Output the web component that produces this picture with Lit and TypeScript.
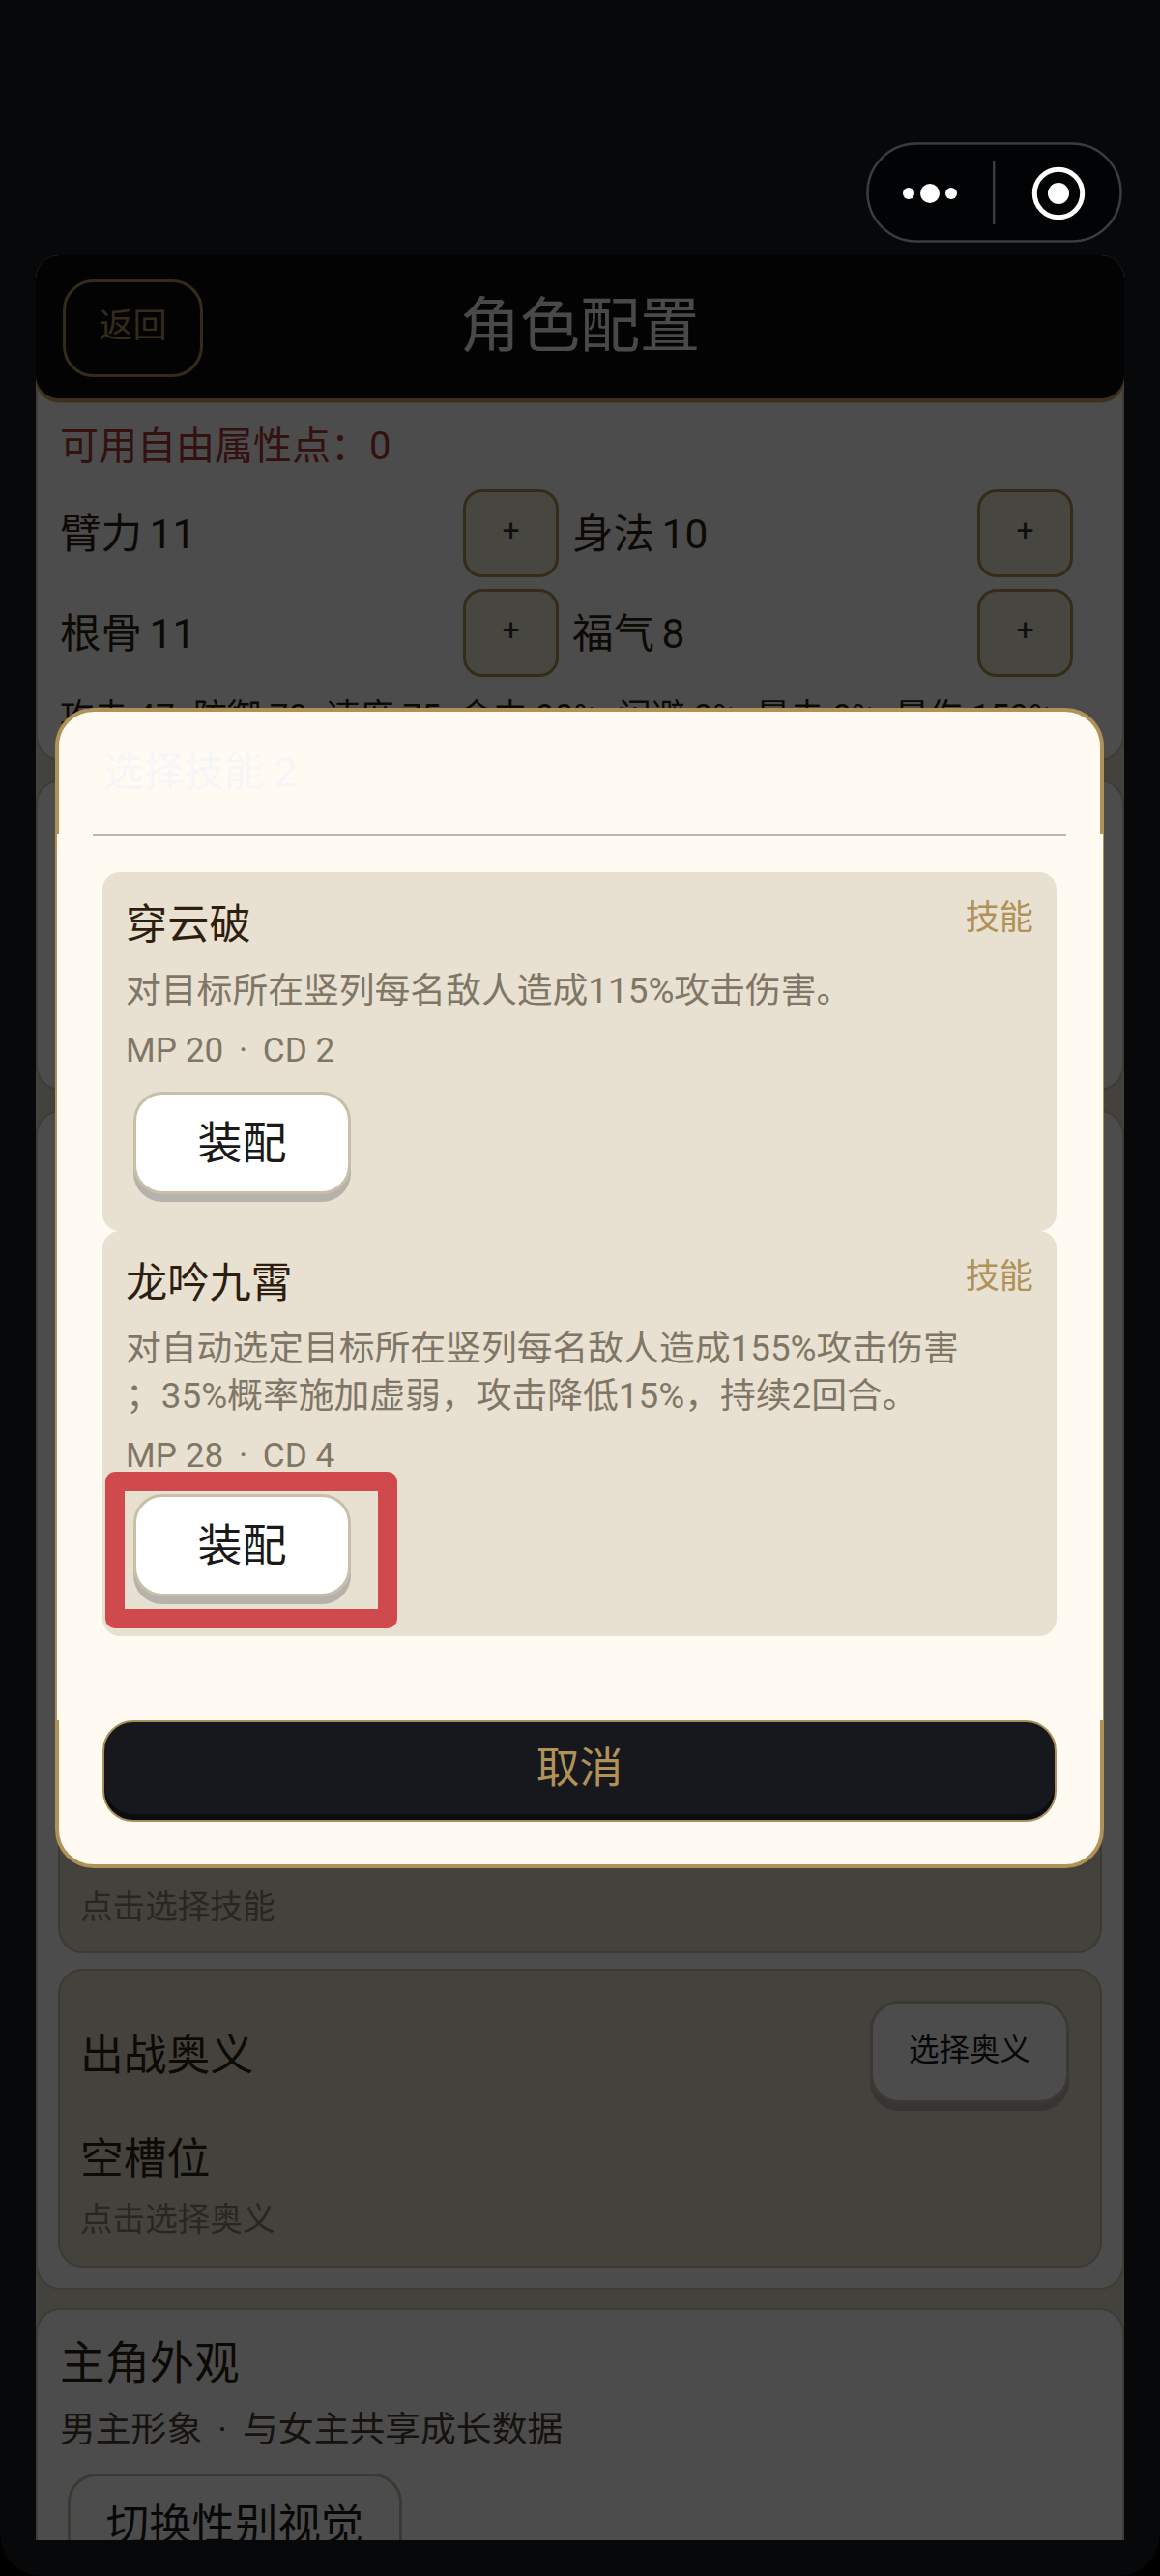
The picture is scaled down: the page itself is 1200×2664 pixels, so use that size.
import { LitElement, html, css } from "lit";
import { customElement } from "lit/decorators.js";

@customElement("app-root")
export class AppRoot extends LitElement {
  static styles = css`
    :host {
      display: block;
      width: 1200px;
      height: 2664px;
      position: relative;
      overflow: hidden;
      background: #000;
      font-family: Roboto, "Noto Sans CJK SC", sans-serif;
      color: #2d1e10;
    }
    * { box-sizing: border-box; }
    .screen {
      isolation: isolate;
      padding: 264px 37px 0;
      height: 2664px;
      overflow: hidden;
      background: #181c24;
      border-radius: 0 0 44px 44px;
    }
    .column {
      height: 2363px;
      overflow: hidden;
      background: #e0dcca;
      border-radius: 24px 24px 0 0;
      display: flex;
      flex-direction: column;
    }
    .header {
      height: 148px;
      flex: none;
      background: #0a0b0e;
      border-radius: 24px;
      box-shadow: 0 4.5px 0 #c8a45c;
      margin-bottom: -28px;
      position: relative;
      z-index: 1;
      display: flex;
      align-items: center;
      justify-content: center;
      padding-bottom: 1px;
    }
    .back {
      position: absolute;
      left: 28px;
      top: 25px;
      width: 145px;
      height: 101px;
      border: 3px solid #b09258;
      border-radius: 32px;
      display: flex;
      align-items: center;
      justify-content: center;
      color: #b09258;
      font-size: 35.2px;
      padding-bottom: 13px;
    }
    .title {
      font-size: 62px;
      line-height: 80px;
      color: #f8f6f2;
    }
    .card {
      background: #fff;
      border: 2px solid #d0c8b4;
      border-radius: 26px;
      flex: none;
    }
    .attrs {
      height: 403px;
      padding: 53px 51px 0 23px;
      border-top: none;
    }
    .free {
      font-size: 40px;
      line-height: 50px;
      color: #a83a35;
      margin-bottom: 19px;
    }
    .grid {
      display: grid;
      grid-template-columns: 516px 518px;
      column-gap: 14px;
      row-gap: 12px;
    }
    .attr {
      display: flex;
      align-items: center;
      justify-content: space-between;
      font-size: 42.5px;
      word-spacing: -3px;
      color: #2d1e10;
    }
    .attr > span { margin-top: -6px; }
    .plus {
      width: 99px;
      height: 91px;
      border: 3px solid #b09258;
      border-radius: 20px;
      background: #f2ecd8;
      color: #33333f;
      font-size: 32px;
      line-height: 78px;
      text-align: center;
    }
    .stats {
      margin-top: 16px;
      font-size: 35.2px;
      line-height: 50px;
      white-space: nowrap;
      display: flex;
      gap: 19px;
      color: #2d1e10;
    }
    .hidden-card { height: 322px; margin-top: 19px; }
    .loadout {
      height: 1220px;
      margin-top: 20px;
      padding: 0 21px 21px;
      display: flex;
      flex-direction: column;
      justify-content: flex-end;
      gap: 16px;
    }
    .slot {
      background: #e0dcca;
      border: 2px solid #c9bfa9;
      border-radius: 26px;
      padding: 0 21px;
      flex: none;
    }
    .slot-a { height: 300px; display: flex; align-items: flex-end; padding-bottom: 22px; }
    .slot-b { height: 309px; position: relative; padding-top: 60px; }
    .slot-head { font-size: 44.8px; line-height: 56px; }
    .slot-btn {
      position: absolute;
      right: 32px;
      top: 31px;
      width: 206px;
      height: 106px;
      background: #fff;
      border: 3px solid #c9bfa9;
      border-radius: 30px;
      box-shadow: 0 8px 0 #b5b2ac;
      display: flex;
      align-items: center;
      justify-content: center;
      font-size: 31.5px;
      color: #1a1a1a;
      padding-bottom: 10px;
    }
    .slot-name { font-size: 44.8px; line-height: 56px; margin-top: 51px; color: #2d1e10; }
    .slot-hint { font-size: 33.6px; line-height: 46px; margin-top: 12px; color: #8a8070; }
    .slot-a .slot-hint { margin-top: 0; }
    .look {
      height: 400px;
      margin-top: 19px;
      padding: 23px 23px 0;
    }
    .look-title { font-size: 46.4px; line-height: 64px; }
    .look-sub { font-size: 36.8px; line-height: 50px; margin-top: 12px; color: #4a3c2c; }
    .look-btn {
      margin: 20px 0 0 8px;
      display: flex;
      align-items: center;
      justify-content: center;
      width: 346px;
      height: 106px;
      background: #fff;
      border: 3px solid #c9bfa9;
      border-radius: 30px;
      font-size: 44.4px;
      color: #1a1a1a;
      padding-bottom: 8px;
    }
    .dot { margin: 0 7px; }

    .mask {
      position: absolute;
      inset: 0;
      background: rgba(0, 0, 0, 0.7);
    }
    .capsule {
      position: absolute;
      left: 896px;
      top: 147px;
      width: 265px;
      height: 104px;
    }
    .modal {
      position: absolute;
      left: 57px;
      top: 732px;
      width: 1085px;
      height: 1200px;
      background: #fffbf3;
      border: 4.5px solid #b09258;
      border-radius: 40px;
      display: flex;
      flex-direction: column;
    }
    .modal-title {
      height: 125.5px;
      flex: none;
      padding: 35px 0 0 46px;
      font-size: 41.6px;
      line-height: 56px;
      color: #f6f6f8;
    }
    .modal-body {
      margin: 0 -2.5px;
      height: 917px;
      flex: none;
      background: #fffbf3;
      padding: 0 47.5px;
    }
    .rule {
      height: 3px;
      background: #b8b8b8;
      margin: 0 -10px 37px;
    }
    .skill {
      background: #e8e0d0;
      border-radius: 18px;
      padding: 27px 24px 0;
      position: relative;
    }
    .skill-one { height: 371px; }
    .skill-two { height: 419px; }
    .skill-name { font-size: 43.2px; line-height: 56px; color: #2d1e10; }
    .skill-tag {
      position: absolute;
      right: 24px;
      top: 24px;
      font-size: 35.2px;
      line-height: 46px;
      color: #b09258;
    }
    .skill-desc {
      font-size: 36.8px;
      line-height: 50px;
      margin-top: 15px;
      color: #7f7666;
    }
    .skill-meta {
      font-size: 35.2px;
      line-height: 46px;
      color: #7f7666;
      margin-top: 13px;
    }
    .skill-two .skill-desc { margin-top: 14px; line-height: 49.5px; }
    .equip {
      display: flex;
      align-items: center;
      justify-content: center;
      width: 225px;
      height: 106px;
      margin-left: 8px;
      background: #fff;
      border: 3px solid #c9bfa9;
      border-radius: 30px;
      box-shadow: 0 8px 0 #b5b2ac;
      font-size: 46px;
      color: #1a1a1a;
      padding-bottom: 8px;
    }
    .skill-one .equip { margin-top: 20px; }
    .skill-two .equip { margin-top: 17px; }
    .highlight {
      position: absolute;
      left: 3px;
      top: 249px;
      width: 302px;
      height: 162px;
      border: 20px solid #d0494c;
      border-radius: 10px;
    }
    .cancel {
      flex: none;
      margin: 0 45px;
      height: 105px;
      background: #16181d;
      border: 2.5px solid #a98f5c;
      border-radius: 32px;
      box-shadow: inset 0 -6px 0 #0b0c0f;
      display: flex;
      align-items: center;
      justify-content: center;
      color: #b09258;
      font-size: 44.8px;
      padding-bottom: 13px;
    }
  `;

  render() {
    return html`
      <div class="screen">
        <div class="column">
          <div class="header">
            <div class="back">返回</div>
            <div class="title">角色配置</div>
          </div>
          <section class="card attrs">
            <div class="free">可用自由属性点：0</div>
            <div class="grid">
              <div class="attr"><span>臂力 11</span><div class="plus">+</div></div>
              <div class="attr"><span>身法 10</span><div class="plus">+</div></div>
              <div class="attr"><span>根骨 11</span><div class="plus">+</div></div>
              <div class="attr"><span>福气 8</span><div class="plus">+</div></div>
            </div>
            <div class="stats">
              <span>攻击 47</span><span>防御 70</span><span>速度 75</span><span>命中 90%</span><span>闪避 0%</span><span>暴击 0%</span><span>暴伤 150%</span>
            </div>
          </section>
          <section class="card hidden-card"></section>
          <section class="card loadout">
            <div class="slot slot-a">
              <div class="slot-hint">点击选择技能</div>
            </div>
            <div class="slot slot-b">
              <div class="slot-head">出战奥义</div>
              <div class="slot-btn">选择奥义</div>
              <div class="slot-name">空槽位</div>
              <div class="slot-hint">点击选择奥义</div>
            </div>
          </section>
          <section class="card look">
            <div class="look-title">主角外观</div>
            <div class="look-sub">男主形象<span class="dot"> · </span>与女主共享成长数据</div>
            <div class="look-btn">切换性别视觉</div>
          </section>
        </div>
      </div>

      <div class="mask"></div>

      <svg class="capsule" viewBox="0 0 265 104" aria-label="capsule">
        <rect x="1.5" y="1.5" width="262" height="101" rx="50.5" fill="#020304" stroke="#3c3c3e" stroke-width="2.5" />
        <rect x="131" y="19" width="2.4" height="66" fill="#3c3c3e" />
        <circle cx="44" cy="53" r="6" fill="#fff" />
        <circle cx="66" cy="53" r="10" fill="#fff" />
        <circle cx="88" cy="53" r="6" fill="#fff" />
        <circle cx="199" cy="53" r="24.7" fill="none" stroke="#fff" stroke-width="5" />
        <circle cx="199" cy="53" r="11" fill="#fff" />
      </svg>

      <div class="modal">
        <div class="modal-title">选择技能 2</div>
        <div class="modal-body">
          <div class="rule"></div>
          <div class="skill skill-one">
            <div class="skill-name">穿云破</div>
            <div class="skill-tag">技能</div>
            <div class="skill-desc">对目标所在竖列每名敌人造成115%攻击伤害。</div>
            <div class="skill-meta">MP 20<span class="dot"> · </span>CD 2</div>
            <div class="equip">装配</div>
          </div>
          <div class="skill skill-two">
            <div class="skill-name">龙吟九霄</div>
            <div class="skill-tag">技能</div>
            <div class="skill-desc">对自动选定目标所在竖列每名敌人造成155%攻击伤害<br />；35%概率施加虚弱，攻击降低15%，持续2回合。</div>
            <div class="skill-meta">MP 28<span class="dot"> · </span>CD 4</div>
            <div class="equip">装配</div>
            <div class="highlight"></div>
          </div>
        </div>
        <div class="cancel">取消</div>
      </div>
    `;
  }
}
